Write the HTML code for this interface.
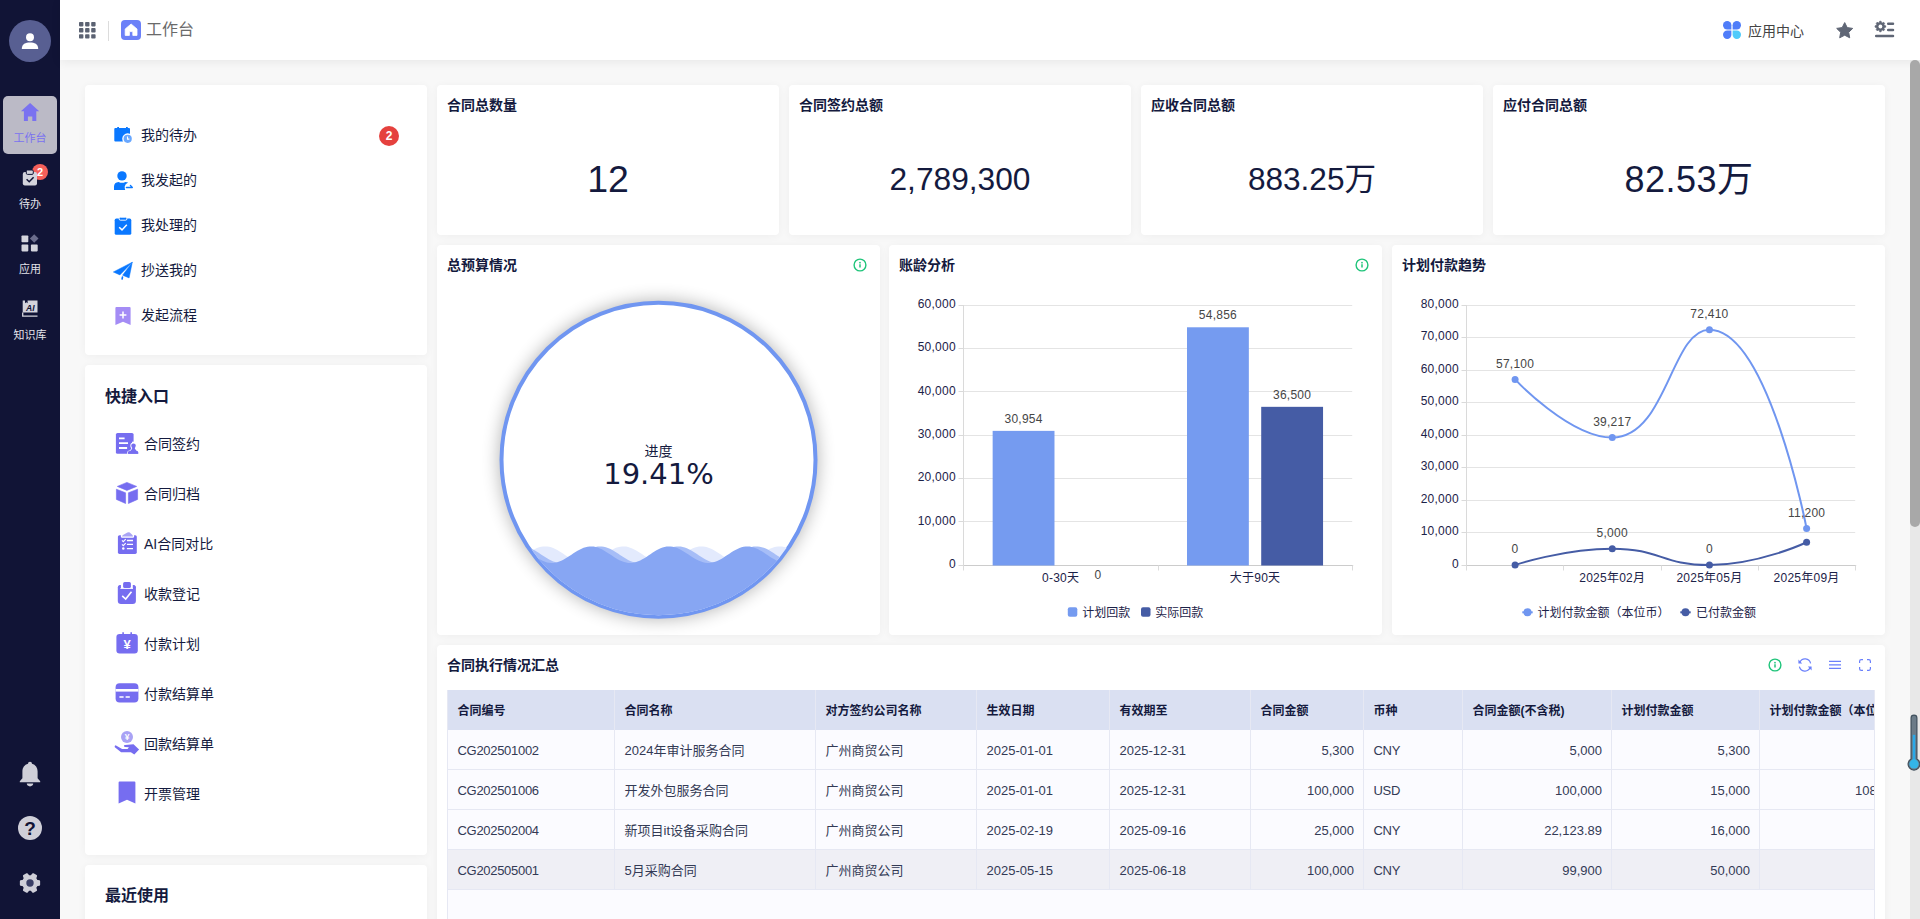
<!DOCTYPE html>
<html lang="zh-CN">
<head>
<meta charset="utf-8">
<title>工作台</title>
<style>
*{box-sizing:border-box;margin:0;padding:0}
html,body{width:1920px;height:919px;overflow:hidden;background:#f8f8f8;font-family:"Liberation Sans","Noto Sans CJK SC",sans-serif;color:#141a3e}
.abs{position:absolute}
#side{position:absolute;left:0;top:0;width:60px;height:919px;background:#111436}
#head{position:absolute;left:60px;top:0;width:1860px;height:60px;background:#fff;box-shadow:0 2px 10px rgba(0,0,0,.07)}
.card{position:absolute;background:#fff;border-radius:4px;box-shadow:0 1px 8px rgba(0,0,0,.045)}
.ct{position:absolute;left:10px;top:12px;font-size:14px;font-weight:700;line-height:16px;color:#141a3e;white-space:nowrap}
.big{position:absolute;left:0;right:0;text-align:center;font-size:36px;line-height:40px;color:#141a3e;top:74px;white-space:nowrap}
.nav{position:absolute;left:0;width:60px;text-align:center;font-size:11px;color:#e3e3ea;line-height:14px}
.li{position:absolute;left:56px;font-size:14px;line-height:16px;color:#141a3e;white-space:nowrap}
.qi{position:absolute;left:59px;font-size:14px;line-height:16px;color:#141a3e;white-space:nowrap}
svg{position:absolute;overflow:visible;z-index:1}
.tw{position:absolute;left:10px;top:45px;width:1428px;height:260px;overflow:hidden;background:#fbfbff;border-left:1px solid #e6e8f3;border-right:1px solid #e6e8f3}
.tin{position:absolute;left:-1px;top:0;width:1500px;height:200px}
.tr{position:absolute;left:0;width:1500px;height:40px;border-bottom:1px solid #e6e8f3;font-size:13px;color:#333a55}
.tr.th{background:#dae0f2;font-size:12px;font-weight:700;color:#141a3e;border-bottom:none}
.tr.hov{background:#efeff5}
.tc{position:absolute;top:0;height:40px;line-height:42px;padding:0 9px 0 9.5px;border-left:1px solid #e6e8f3;white-space:nowrap;overflow:hidden}
.tc.r{text-align:right}
.tc.n{letter-spacing:-0.3px}

</style>
</head>
<body>
<!-- SIDEBAR -->
<div id="side">
  <div class="abs" style="left:9px;top:20px;width:42px;height:42px;border-radius:50%;background:#585f92"></div>
  <svg style="left:21px;top:32px" width="18" height="18" viewBox="0 0 18 18"><circle cx="9" cy="5.2" r="4" fill="#fff"/><path d="M0.8 17 C0.8 12 4.5 10.6 9 10.6 C13.5 10.6 17.2 12 17.2 17Z" fill="#fff"/></svg>
  <div class="abs" style="left:3px;top:96px;width:54px;height:58px;border-radius:5px;background:#bbbac6"></div>

  <svg style="left:20px;top:102px" width="20" height="20" viewBox="0 0 20 20"><path d="M10.1 1.1 L19.2 9.3 H16.3 V18.9 H12.3 V14.4 H7.9 V18.9 H3.9 V9.3 H0.9 Z" fill="#7a72f0"/></svg>
  <svg style="left:22px;top:169px" width="16" height="18" viewBox="0 0 16 18"><rect x="0.8" y="3" width="14.2" height="13.4" rx="2" fill="#d4d4dc"/><rect x="4.3" y="1" width="7" height="4.4" rx="1.2" fill="#d4d4dc" stroke="#111436" stroke-width="1"/><path d="M4.6 10.3 L7.2 12.8 L11.6 8.2" fill="none" stroke="#111436" stroke-width="1.5"/></svg>
  <div class="abs" style="left:32px;top:164px;width:16px;height:16px;border-radius:50%;background:#f5605a;color:#fff;font-size:11px;line-height:16px;text-align:center;font-weight:700">2</div>
  <svg style="left:21px;top:235px" width="18" height="18" viewBox="0 0 18 18"><rect x="0.5" y="0.5" width="6.8" height="6.8" rx="0.8" fill="#d4d4dc"/><rect x="0.5" y="9.6" width="6.8" height="6.8" rx="0.8" fill="#d4d4dc"/><rect x="9.9" y="9.6" width="6.8" height="6.8" rx="0.8" fill="#d4d4dc"/><path d="M13.2 -0.8 L17.5 3.5 L13.2 7.8 L8.9 3.5 Z" fill="#6b6d8c"/></svg>
  <svg style="left:22px;top:300px" width="16" height="17" viewBox="0 0 16 17"><path d="M0.7 0.6 H3 V3.2 L4.3 2.2 L5.6 3.2 V0.6 H15.5 V12.4 H0.7 Z" fill="#d4d4dc"/><path d="M0.7 12.4 V16.2 H15.5" fill="none" stroke="#d4d4dc" stroke-width="1.3"/><text x="8.3" y="10.6" font-size="8.6" font-weight="700" font-style="italic" text-anchor="middle" fill="#111436" font-family="Liberation Sans,sans-serif">AI</text></svg>
  <svg style="left:19px;top:761px" width="22" height="26" viewBox="0 0 22 26"><path d="M11 0.8 C12.2 0.8 13 1.6 13 2.8 C16.6 3.8 18.6 6.8 18.6 10.6 V17.2 L21.2 20.2 V21.2 H0.8 V20.2 L3.4 17.2 V10.6 C3.4 6.8 5.4 3.8 9 2.8 C9 1.6 9.8 0.8 11 0.8Z" fill="#cfcfd8"/><path d="M7.8 22.6 H14.2 C14.2 24.4 12.8 25.4 11 25.4 C9.2 25.4 7.8 24.4 7.8 22.6Z" fill="#cfcfd8"/></svg>
  <div class="abs" style="left:18px;top:816px;width:24px;height:24px;border-radius:50%;background:#cfcfd8;color:#111436;font-size:19px;font-weight:700;line-height:25px;text-align:center">?</div>
  <svg style="left:19px;top:872px" width="22" height="22" viewBox="-11 -11 22 22"><path fill="#cfcfd8" stroke="#cfcfd8" stroke-width="2" stroke-linejoin="round" d="M6.66,-2.16 L9.14,-1.74 L9.14,1.74 L6.66,2.16 L5.20,4.68 L6.08,7.04 L3.06,8.78 L1.46,6.85 L-1.46,6.85 L-3.06,8.78 L-6.08,7.04 L-5.20,4.68 L-6.66,2.16 L-9.14,1.74 L-9.14,-1.74 L-6.66,-2.16 L-5.20,-4.68 L-6.08,-7.04 L-3.06,-8.78 L-1.46,-6.85 L1.46,-6.85 L3.06,-8.78 L6.08,-7.04 L5.20,-4.68Z"/><circle r="3.7" fill="#3a3f66"/></svg>
  <div class="nav" style="top:131px;color:#7a72f0">工作台</div>
  <div class="nav" style="top:197px">待办</div>
  <div class="nav" style="top:262px">应用</div>
  <div class="nav" style="top:328px">知识库</div>
</div>
<!-- HEADER -->
<div id="head">

  <svg style="left:18.6px;top:21.6px" width="17" height="17" viewBox="0 0 17 17"><rect x="0.0" y="0.0" width="4.4" height="4.4" rx="0.8" fill="#5b6272"/><rect x="0.0" y="6.1" width="4.4" height="4.4" rx="0.8" fill="#5b6272"/><rect x="0.0" y="12.2" width="4.4" height="4.4" rx="0.8" fill="#5b6272"/><rect x="6.1" y="0.0" width="4.4" height="4.4" rx="0.8" fill="#5b6272"/><rect x="6.1" y="6.1" width="4.4" height="4.4" rx="0.8" fill="#5b6272"/><rect x="6.1" y="12.2" width="4.4" height="4.4" rx="0.8" fill="#5b6272"/><rect x="12.2" y="0.0" width="4.4" height="4.4" rx="0.8" fill="#5b6272"/><rect x="12.2" y="6.1" width="4.4" height="4.4" rx="0.8" fill="#5b6272"/><rect x="12.2" y="12.2" width="4.4" height="4.4" rx="0.8" fill="#5b6272"/></svg>
  <svg style="left:61px;top:20px" width="20" height="20" viewBox="0 0 20 20"><path d="M10.1 4 L16 9 V15.4 H11.8 V11.6 H8.4 V15.4 H4.2 V9 Z" fill="#fff" stroke="#fff" stroke-width="0.8" stroke-linejoin="round"/></svg>
  <svg style="left:1663px;top:21px" width="18" height="18" viewBox="0 0 18 18"><path d="M4.2 0 A4.2 4.2 0 0 1 8.4 4.2 V8.4 H4.2 A4.2 4.2 0 0 1 4.2 0Z" fill="#4f7df9"/><path d="M13.8 0 A4.2 4.2 0 0 1 13.8 8.4 H9.6 V4.2 A4.2 4.2 0 0 1 13.8 0Z" fill="#4f7df9"/><path d="M4.2 18 A4.2 4.2 0 0 1 4.2 9.6 H8.4 V13.8 A4.2 4.2 0 0 1 4.2 18Z" fill="#4f7df9"/><path d="M13.8 18 A4.2 4.2 0 0 0 13.8 9.6 H9.6 V13.8 A4.2 4.2 0 0 0 13.8 18Z" fill="#4fcbfa"/></svg>
  <svg style="left:1776px;top:21.5px" width="18" height="17" viewBox="0 0 18 17"><path d="M8.7 0.6 L11.2 5.6 L16.7 6.4 L12.7 10.3 L13.7 15.8 L8.7 13.2 L3.7 15.8 L4.7 10.3 L0.7 6.4 L6.2 5.6 Z" fill="#5f6675" stroke="#5f6675" stroke-width="1" stroke-linejoin="round"/></svg>
  <svg style="left:1815px;top:21px" width="19" height="17" viewBox="0 0 19 17"><g transform="translate(5.4,5.5)"><path d="M4.08,-0.98 L5.26,-0.66 L5.26,0.66 L4.08,0.98 L3.58,2.19 L4.19,3.25 L3.25,4.19 L2.19,3.58 L0.98,4.08 L0.66,5.26 L-0.66,5.26 L-0.98,4.08 L-2.19,3.58 L-3.25,4.19 L-4.19,3.25 L-3.58,2.19 L-4.08,0.98 L-5.26,0.66 L-5.26,-0.66 L-4.08,-0.98 L-3.58,-2.19 L-4.19,-3.25 L-3.25,-4.19 L-2.19,-3.58 L-0.98,-4.08 L-0.66,-5.26 L0.66,-5.26 L0.98,-4.08 L2.19,-3.58 L3.25,-4.19 L4.19,-3.25 L3.58,-2.19Z" fill="#5f6675" stroke="#5f6675" stroke-width="0.8" stroke-linejoin="round"/><circle r="1.9" fill="#fff"/></g><path d="M13.2 2.8 H18 M13.2 9 H18 M1.2 15 H18" stroke="#5f6675" stroke-width="2.5" stroke-linecap="round" fill="none"/></svg>
  <div class="abs" style="left:48px;top:21px;width:1px;height:20px;background:#dcdcdc"></div>
  <div class="abs" style="left:61px;top:20px;width:20px;height:20px;border-radius:4px;background:#6b80f8"></div>
  <div class="abs" style="left:86px;top:19px;font-size:16px;line-height:22px;color:#6a6a6a">工作台</div>
  <div class="abs" style="left:1688px;top:23px;font-size:14px;line-height:16px;color:#444">应用中心</div>
</div>
<!-- LEFT -->
<div class="card" style="left:85px;top:85px;width:342px;height:270px" id="c1">

  <svg style="left:29px;top:42px" width="19" height="17" viewBox="0 0 19 17"><path d="M1.3 0.9 H3.2 V0 H5 V0.9 H12 V0 H13.8 V0.9 H15 Q16 0.9 16 1.9 V13.6 Q16 14.6 15 14.6 H1.3 Q0.3 14.6 0.3 13.6 V1.9 Q0.3 0.9 1.3 0.9Z" fill="#0a78ff"/><circle cx="13.7" cy="11.8" r="5.5" fill="#fff"/><circle cx="13.7" cy="11.8" r="4.1" fill="#69a8ff"/><path d="M13.5 9.4 V12.1 H15.4" stroke="#fff" stroke-width="1.1" fill="none"/></svg>
  <svg style="left:29px;top:86px" width="19" height="19" viewBox="0 0 19 19"><circle cx="8" cy="4.9" r="4.7" fill="#0a78ff"/><path d="M0 19 V15.6 Q0.1 11.2 4.6 10.9 Q8 12.6 11.4 10.9 Q13 10.9 14.1 11.6 Q11 13 10.7 15.6 Q10.6 17.4 11.2 19 Z" fill="#0a78ff"/><path d="M12.4 16.5 H18.3 L16.4 14.4" stroke="#0a78ff" stroke-width="1.4" stroke-linecap="round" stroke-linejoin="round" fill="none"/></svg>
  <svg style="left:29px;top:132px" width="18" height="18" viewBox="0 0 18 18"><rect x="0.7" y="1.6" width="16.6" height="16.2" rx="1.6" fill="#0a78ff"/><rect x="5.2" y="0.2" width="7.6" height="3" rx="1.2" fill="#0a78ff" stroke="#fff" stroke-width="0.9"/><path d="M5.2 10.2 L8 12.9 L12.8 7.8" fill="none" stroke="#fff" stroke-width="1.5"/></svg>
  <svg style="left:28px;top:177px" width="20" height="18" viewBox="0 0 20 18"><path d="M19.3 0.2 L0.3 10 L6.9 12.9 Z" fill="#0a78ff" stroke="#0a78ff" stroke-width="0.5" stroke-linejoin="round"/><path d="M19.3 0.2 L9.6 13.2 L16.1 15.9 Z" fill="#0a78ff" stroke="#0a78ff" stroke-width="0.5" stroke-linejoin="round"/><path d="M9.5 15 L9.1 17" stroke="#0a78ff" stroke-width="1.6" stroke-linecap="round"/></svg>
  <svg style="left:30px;top:222px" width="16" height="19" viewBox="0 0 16 19"><path d="M1.4 0 H14.6 Q15.6 0 15.6 1 V18 L8 14.8 L0.4 18 V1 Q0.4 0 1.4 0Z" fill="#a48cf5"/><path d="M8 4.6 V11.4 M4.6 8 H11.4" stroke="#fff" stroke-width="1.5" fill="none"/></svg>
  <div class="li" style="top:42px">我的待办</div>
  <div class="li" style="top:87px">我发起的</div>
  <div class="li" style="top:132px">我处理的</div>
  <div class="li" style="top:177px">抄送我的</div>
  <div class="li" style="top:222px">发起流程</div>
  <div class="abs" style="left:294px;top:41px;width:20px;height:20px;border-radius:50%;background:#e5413e;color:#fff;font-size:12px;font-weight:700;line-height:20px;text-align:center">2</div>
</div>
<div class="card" style="left:85px;top:365px;width:342px;height:490px" id="c2">
  <div class="abs" style="left:20px;top:22px;font-size:16px;font-weight:700;line-height:20px">快捷入口</div>

  <svg style="left:30px;top:68px" width="24" height="22" viewBox="0 0 24 22"><rect x="0.9" y="0" width="17.7" height="20.8" rx="1.6" fill="#766df0"/><path d="M4 5.4 H9.6 M4 10.1 H13 M4 15 H12.1" stroke="#fff" stroke-width="1.8" fill="none"/><rect x="17" y="8.7" width="4" height="13" fill="#fff"/><g fill="#766df0" stroke="#fff" stroke-width="1.7" paint-order="stroke"><path d="M13.1 20.8 V19.5 Q13.1 18.3 14.4 18.3 H15.2 L17.1 16 V14 H19.9 V16 L21.8 18.3 H22 Q23.2 18.3 23.2 19.5 V20.8 Z"/><circle cx="18.5" cy="12.7" r="2.3"/></g><path d="M13.1 20.8 V19.5 Q13.1 18.3 14.4 18.3 H15.2 L17.1 16 V13.6 H19.9 V16 L21.8 18.3 H22 Q23.2 18.3 23.2 19.5 V20.8 Z" fill="#766df0"/></svg>
  <svg style="left:30px;top:117px" width="24" height="23" viewBox="0 0 24 23"><g fill="#766df0" stroke="#766df0" stroke-width="0.6" stroke-linejoin="round"><path d="M11.9 0.4 L21.7 4.4 L11.9 8.4 L2.3 4.4 Z"/><path d="M1.4 7.2 L10.6 10.8 V21.5 L1.4 17.4 Z"/><path d="M22.6 7.2 L13.4 10.8 V21.5 L22.6 17.4 Z"/></g></svg>
  <svg style="left:32px;top:167px" width="20" height="22" viewBox="0 0 20 22"><rect x="0.9" y="3.2" width="18.9" height="18.7" rx="1.6" fill="#766df0"/><path d="M3.9 2.5 H17.1 V4.6 Q17.1 5.8 15.9 5.8 H5.1 Q3.9 5.8 3.9 4.6 Z" fill="#fff"/><path d="M5 4.6 Q5 3.6 6 3 L10.4 0.5 Q11.7 -0.1 12.8 0.5 L15.4 3 Q16 3.6 16 4.6 Z" fill="#a9a4f5"/><path d="M9.9 8.5 H16 M9.9 12.4 H16 M9.9 16.6 H16" stroke="#fff" stroke-width="1.3" fill="none"/><path d="M5 8.4 L6.3 9.7 L8.7 7.2 M5 12.3 L6.3 13.6 L8.7 11.1" stroke="#fff" stroke-width="1.1" fill="none"/><circle cx="6.3" cy="16.4" r="1.25" fill="#fff"/></svg>
  <svg style="left:32px;top:216px" width="20" height="23" viewBox="0 0 20 23"><rect x="0.8" y="3.9" width="18.1" height="19" rx="3.2" fill="#766df0"/><path d="M3.4 2 H16 V7.9 H3.4 Z" fill="#fff"/><path d="M0.8 7 Q0.8 3.9 3.9 3.9 V7 Z M18.9 7 Q18.9 3.9 15.8 3.9 V7 Z" fill="#766df0"/><rect x="6.1" y="1" width="7.8" height="6" rx="1.5" fill="#766df0"/><path d="M5.2 14.8 L8.7 18 L14.5 10.7" fill="none" stroke="#fff" stroke-width="1.6"/></svg>
  <svg style="left:31px;top:267px" width="22" height="22" viewBox="0 0 22 22"><rect x="0.4" y="1.9" width="21.4" height="19.6" rx="3.2" fill="#766df0"/><path d="M7.1 0.3 V2.5 M15.2 0.3 V2.5" stroke="#766df0" stroke-width="1.6"/><text x="11" y="16.6" font-size="13" font-weight="700" text-anchor="middle" fill="#fff" font-family="Liberation Sans,sans-serif">¥</text></svg>
  <svg style="left:30px;top:318px" width="24" height="20" viewBox="0 0 24 20"><rect x="0.6" y="0.2" width="22.8" height="19.4" rx="4" fill="#766df0"/><rect x="0.6" y="6" width="22.8" height="2.6" fill="#fff"/><path d="M4.4 14 H8.6 M10.6 14 H14.8" stroke="#fff" stroke-width="1.6"/></svg>
  <svg style="left:29px;top:366px" width="26" height="24" viewBox="0 0 26 24"><circle cx="13" cy="6" r="6" fill="#a9a2f5"/><text x="13" y="9" font-size="8.5" font-weight="700" text-anchor="middle" fill="#fff" font-family="Liberation Sans,sans-serif">¥</text><path d="M1.6 14.2 L8.1 17.9 H13.6 L14.9 16.3 L11 16 Q9.8 15.8 9.9 14.8 Q10 13.9 11 13.9 L19.5 13.3 L25.1 18.6 L20.3 23.4 L16.9 21.2 H7.1 L0.8 16.2 Q0.2 14.6 1.6 14.2Z" fill="#766df0"/></svg>
  <svg style="left:33px;top:416px" width="18" height="23" viewBox="0 0 18 23"><path d="M1.6 0.4 H16.4 Q17.4 0.4 17.4 1.4 V22.6 L9 18.8 L0.6 22.6 V1.4 Q0.6 0.4 1.6 0.4Z" fill="#766df0"/></svg>
  <div class="qi" style="top:71px">合同签约</div>
  <div class="qi" style="top:121px">合同归档</div>
  <div class="qi" style="top:171px">AI合同对比</div>
  <div class="qi" style="top:221px">收款登记</div>
  <div class="qi" style="top:271px">付款计划</div>
  <div class="qi" style="top:321px">付款结算单</div>
  <div class="qi" style="top:371px">回款结算单</div>
  <div class="qi" style="top:421px">开票管理</div>
</div>
<div class="card" style="left:85px;top:865px;width:342px;height:100px" id="c3">
  <div class="abs" style="left:20px;top:21px;font-size:16px;font-weight:700;line-height:20px">最近使用</div>
</div>
<!-- STATS -->
<div class="card" style="left:437px;top:85px;width:342px;height:150px"><div class="ct">合同总数量</div><div class="big" style="top:74.2px;font-size:37.5px">12</div></div>
<div class="card" style="left:789px;top:85px;width:342px;height:150px"><div class="ct">合同签约总额</div><div class="big" style="font-size:31.7px">2,789,300</div></div>
<div class="card" style="left:1141px;top:85px;width:342px;height:150px"><div class="ct">应收合同总额</div><div class="big" style="font-size:31.6px;top:74px">883.25万</div></div>
<div class="card" style="left:1493px;top:85px;width:392px;height:150px"><div class="ct">应付合同总额</div><div class="big" style="top:75px;letter-spacing:.45px">82.53万</div></div>
<!-- CHARTS -->
<div class="card" style="left:437px;top:245px;width:443px;height:390px" id="g1"><div class="ct">总预算情况</div>
<svg style="left:0;top:0" width="443" height="390" viewBox="0 0 443 390">
<defs><clipPath id="lq"><circle cx="221.5" cy="214.75" r="155.5"/></clipPath><filter id="lqs" x="-30%" y="-30%" width="160%" height="160%"><feGaussianBlur stdDeviation="9"/></filter></defs>
<circle cx="221.5" cy="214.75" r="159" fill="#000" opacity=".3" filter="url(#lqs)"/>
<circle cx="221.5" cy="214.75" r="157" fill="#fff" stroke="#7096f1" stroke-width="4"/>
<g clip-path="url(#lq)">
<path d="M59.5,315.7 L61.52,316.55 L63.55,317.22 L65.58,317.69 L67.6,317.95 L69.62,317.99 L71.65,317.81 L73.67,317.42 L75.7,316.83 L77.72,316.04 L79.75,315.09 L81.78,314 L83.8,312.79 L85.83,311.5 L87.85,310.17 L89.88,308.82 L91.9,307.49 L93.92,306.23 L95.95,305.05 L97.97,304 L100,303.1 L102.03,302.37 L104.05,301.84 L106.08,301.51 L108.1,301.4 L110.12,301.51 L112.15,301.84 L114.17,302.37 L116.2,303.1 L118.22,304 L120.25,305.05 L122.28,306.23 L124.3,307.49 L126.33,308.82 L128.35,310.17 L130.38,311.5 L132.4,312.79 L134.43,314 L136.45,315.09 L138.47,316.04 L140.5,316.83 L142.53,317.42 L144.55,317.81 L146.57,317.99 L148.6,317.95 L150.62,317.69 L152.65,317.22 L154.68,316.55 L156.7,315.7 L158.72,314.69 L160.75,313.55 L162.78,312.31 L164.8,311 L166.82,309.65 L168.85,308.31 L170.88,307 L172.9,305.76 L174.93,304.63 L176.95,303.63 L178.97,302.8 L181,302.14 L183.03,301.69 L185.05,301.44 L187.07,301.42 L189.1,301.61 L191.12,302.02 L193.15,302.63 L195.18,303.42 L197.2,304.38 L199.22,305.49 L201.25,306.7 L203.28,307.99 L205.3,309.33 L207.32,310.68 L209.35,312 L211.38,313.26 L213.4,314.43 L215.43,315.47 L217.45,316.36 L219.47,317.08 L221.5,317.6 L223.53,317.91 L225.55,318 L227.57,317.87 L229.6,317.53 L231.62,316.98 L233.65,316.24 L235.68,315.33 L237.7,314.27 L239.72,313.08 L241.75,311.81 L243.78,310.48 L245.8,309.13 L247.82,307.8 L249.85,306.52 L251.88,305.32 L253.9,304.23 L255.93,303.29 L257.95,302.52 L259.98,301.94 L262,301.57 L264.02,301.41 L266.05,301.46 L268.07,301.74 L270.1,302.23 L272.12,302.91 L274.15,303.77 L276.18,304.79 L278.2,305.94 L280.23,307.19 L282.25,308.5 L284.27,309.85 L286.3,311.19 L288.32,312.5 L290.35,313.72 L292.38,314.85 L294.4,315.83 L296.43,316.66 L298.45,317.3 L300.48,317.74 L302.5,317.97 L304.52,317.98 L306.55,317.77 L308.57,317.35 L310.6,316.72 L312.62,315.91 L314.65,314.94 L316.68,313.83 L318.7,312.6 L320.73,311.31 L322.75,309.97 L324.77,308.62 L326.8,307.3 L328.82,306.05 L330.85,304.89 L332.88,303.85 L334.9,302.98 L336.93,302.28 L338.95,301.77 L340.98,301.48 L343,301.4 L345.02,301.54 L347.05,301.9 L349.07,302.47 L351.1,303.22 L353.12,304.15 L355.15,305.22 L357.18,306.41 L359.2,307.69 L361.23,309.02 L363.25,310.37 L365.27,311.7 L367.3,312.98 L369.32,314.17 L371.35,315.24 L373.38,316.17 L375.4,316.93 L377.43,317.49 L379.45,317.85 L381.48,318 L383.5,317.92 L383.5,376.75 L59.5,376.75 Z" fill="#e3eafd"/>
<path d="M59.5,313.46 L61.52,312.21 L63.55,310.9 L65.58,309.55 L67.6,308.21 L69.62,306.9 L71.65,305.68 L73.67,304.55 L75.7,303.57 L77.72,302.74 L79.75,302.1 L81.78,301.66 L83.8,301.43 L85.83,301.42 L87.85,301.63 L89.88,302.05 L91.9,302.68 L93.92,303.49 L95.95,304.46 L97.97,305.57 L100,306.8 L102.03,308.09 L104.05,309.43 L106.08,310.78 L108.1,312.1 L110.12,313.35 L112.15,314.51 L114.17,315.55 L116.2,316.42 L118.22,317.12 L120.25,317.63 L122.28,317.92 L124.3,318 L126.33,317.86 L128.35,317.5 L130.38,316.93 L132.4,316.18 L134.43,315.25 L136.45,314.18 L138.47,312.99 L140.5,311.71 L142.53,310.38 L144.55,309.03 L146.57,307.7 L148.6,306.42 L150.62,305.23 L152.65,304.16 L154.68,303.23 L156.7,302.47 L158.72,301.91 L160.75,301.55 L162.78,301.4 L164.8,301.48 L166.82,301.77 L168.85,302.27 L170.88,302.97 L172.9,303.84 L174.93,304.87 L176.95,306.03 L178.97,307.28 L181,308.6 L183.03,309.95 L185.05,311.29 L187.07,312.59 L189.1,313.81 L191.12,314.93 L193.15,315.9 L195.18,316.71 L197.2,317.34 L199.22,317.76 L201.25,317.98 L203.28,317.97 L205.3,317.74 L207.32,317.31 L209.35,316.67 L211.38,315.84 L213.4,314.86 L215.43,313.74 L217.45,312.51 L219.47,311.21 L221.5,309.87 L223.53,308.52 L225.55,307.21 L227.57,305.96 L229.6,304.81 L231.62,303.78 L233.65,302.92 L235.68,302.23 L237.7,301.74 L239.72,301.47 L241.75,301.41 L243.78,301.56 L245.8,301.94 L247.82,302.51 L249.85,303.28 L251.88,304.22 L253.9,305.3 L255.93,306.5 L257.95,307.78 L259.98,309.12 L262,310.47 L264.02,311.79 L266.05,313.07 L268.07,314.25 L270.1,315.32 L272.12,316.23 L274.15,316.98 L276.18,317.53 L278.2,317.87 L280.23,318 L282.25,317.91 L284.27,317.6 L286.3,317.08 L288.32,316.37 L290.35,315.49 L292.38,314.45 L294.4,313.28 L296.43,312.02 L298.45,310.7 L300.48,309.35 L302.5,308.01 L304.52,306.72 L306.55,305.5 L308.57,304.4 L310.6,303.43 L312.62,302.63 L314.65,302.02 L316.68,301.61 L318.7,301.42 L320.73,301.44 L322.75,301.68 L324.77,302.13 L326.8,302.79 L328.82,303.62 L330.85,304.62 L332.88,305.75 L334.9,306.98 L336.93,308.29 L338.95,309.63 L340.98,310.98 L343,312.29 L345.02,313.53 L347.05,314.68 L349.07,315.69 L351.1,316.54 L353.12,317.21 L355.15,317.68 L357.18,317.95 L359.2,317.99 L361.23,317.82 L363.25,317.43 L365.27,316.83 L367.3,316.05 L369.32,315.1 L371.35,314.01 L373.38,312.81 L375.4,311.52 L377.43,310.18 L379.45,308.83 L381.48,307.51 L383.5,306.24 L383.5,376.75 L59.5,376.75 Z" fill="#a6bdf7"/>
<path d="M59.5,307.56 L61.52,306.29 L63.55,305.11 L65.58,304.05 L67.6,303.14 L69.62,302.4 L71.65,301.86 L73.67,301.52 L75.7,301.4 L77.72,301.5 L79.75,301.81 L81.78,302.34 L83.8,303.06 L85.83,303.95 L87.85,305 L89.88,306.17 L91.9,307.43 L93.92,308.75 L95.95,310.1 L97.97,311.44 L100,312.73 L102.03,313.94 L104.05,315.04 L106.08,316 L108.1,316.79 L110.12,317.4 L112.15,317.8 L114.17,317.99 L116.2,317.95 L118.22,317.71 L120.25,317.24 L122.28,316.58 L124.3,315.74 L126.33,314.74 L128.35,313.61 L130.38,312.37 L132.4,311.06 L134.43,309.72 L136.45,308.37 L138.47,307.06 L140.5,305.82 L142.53,304.68 L144.55,303.68 L146.57,302.83 L148.6,302.17 L150.62,301.7 L152.65,301.45 L154.68,301.41 L156.7,301.59 L158.72,301.99 L160.75,302.59 L162.78,303.38 L164.8,304.33 L166.82,305.43 L168.85,306.64 L170.88,307.93 L172.9,309.27 L174.93,310.62 L176.95,311.94 L178.97,313.2 L181,314.38 L183.03,315.43 L185.05,316.32 L187.07,317.05 L189.1,317.58 L191.12,317.9 L193.15,318 L195.18,317.88 L197.2,317.55 L199.22,317.02 L201.25,316.28 L203.28,315.38 L205.3,314.32 L207.32,313.14 L209.35,311.88 L211.38,310.55 L213.4,309.2 L215.43,307.86 L217.45,306.58 L219.47,305.37 L221.5,304.28 L223.53,303.34 L225.55,302.56 L227.57,301.97 L229.6,301.58 L231.62,301.41 L233.65,301.46 L235.68,301.72 L237.7,302.2 L239.72,302.87 L241.75,303.73 L243.78,304.74 L245.8,305.88 L247.82,307.13 L249.85,308.44 L251.88,309.78 L253.9,311.13 L255.93,312.43 L257.95,313.67 L259.98,314.79 L262,315.79 L264.02,316.62 L266.05,317.27 L268.07,317.72 L270.1,317.96 L272.12,317.98 L274.15,317.78 L276.18,317.37 L278.2,316.76 L280.23,315.96 L282.25,314.99 L284.27,313.88 L286.3,312.67 L288.32,311.37 L290.35,310.03 L292.38,308.69 L294.4,307.36 L296.43,306.11 L298.45,304.94 L300.48,303.9 L302.5,303.02 L304.52,302.31 L306.55,301.79 L308.57,301.49 L310.6,301.4 L312.62,301.53 L314.65,301.88 L316.68,302.43 L318.7,303.18 L320.73,304.1 L322.75,305.16 L324.77,306.35 L326.8,307.62 L328.82,308.95 L330.85,310.3 L332.88,311.63 L334.9,312.91 L336.93,314.11 L338.95,315.19 L340.98,316.13 L343,316.89 L345.02,317.47 L347.05,317.84 L349.07,318 L351.1,317.93 L353.12,317.65 L355.15,317.16 L357.18,316.47 L359.2,315.6 L361.23,314.58 L363.25,313.43 L365.27,312.18 L367.3,310.86 L369.32,309.52 L371.35,308.17 L373.38,306.87 L375.4,305.65 L377.43,304.53 L379.45,303.54 L381.48,302.72 L383.5,302.09 L383.5,376.75 L59.5,376.75 Z" fill="#87a6f3"/>
</g>
<text x="221.5" y="210.7" text-anchor="middle" font-size="14" fill="#141a3e">进度</text>
<text x="221.5" y="239.2" text-anchor="middle" font-size="29" font-family="DejaVu Sans,sans-serif" fill="#141a3e">19.41%</text>
</svg>
<svg style="left:415.6px;top:12.800000000000011px" width="14" height="14" viewBox="-7 -7 14 14"><circle r="5.9" fill="none" stroke="#1fc47a" stroke-width="1.4"/><circle cy="-2.3" r="0.85" fill="#1fc47a"/><path d="M0 -0.7 V2.6" stroke="#1fc47a" stroke-width="1.5"/></svg>
</div>
<div class="card" style="left:889px;top:245px;width:493px;height:390px" id="g2"><div class="ct">账龄分析</div>
<svg style="left:0;top:0" width="493" height="390" viewBox="0 0 493 390" font-size="12">
<line x1="69.5" x2="74.5" y1="320.5" y2="320.5" stroke="#dadada"/>
<text x="66.9" y="322.9" text-anchor="end" fill="#1c2248" letter-spacing="0.25">0</text>
<line x1="74.5" x2="463.2" y1="276.5" y2="276.5" stroke="#e4e4e4"/>
<line x1="69.5" x2="74.5" y1="276.5" y2="276.5" stroke="#dadada"/>
<text x="66.9" y="279.57" text-anchor="end" fill="#1c2248" letter-spacing="0.25">10,000</text>
<line x1="74.5" x2="463.2" y1="233.5" y2="233.5" stroke="#e4e4e4"/>
<line x1="69.5" x2="74.5" y1="233.5" y2="233.5" stroke="#dadada"/>
<text x="66.9" y="236.23" text-anchor="end" fill="#1c2248" letter-spacing="0.25">20,000</text>
<line x1="74.5" x2="463.2" y1="190.5" y2="190.5" stroke="#e4e4e4"/>
<line x1="69.5" x2="74.5" y1="190.5" y2="190.5" stroke="#dadada"/>
<text x="66.9" y="192.9" text-anchor="end" fill="#1c2248" letter-spacing="0.25">30,000</text>
<line x1="74.5" x2="463.2" y1="146.5" y2="146.5" stroke="#e4e4e4"/>
<line x1="69.5" x2="74.5" y1="146.5" y2="146.5" stroke="#dadada"/>
<text x="66.9" y="149.57" text-anchor="end" fill="#1c2248" letter-spacing="0.25">40,000</text>
<line x1="74.5" x2="463.2" y1="103.5" y2="103.5" stroke="#e4e4e4"/>
<line x1="69.5" x2="74.5" y1="103.5" y2="103.5" stroke="#dadada"/>
<text x="66.9" y="106.23" text-anchor="end" fill="#1c2248" letter-spacing="0.25">50,000</text>
<line x1="74.5" x2="463.2" y1="60.5" y2="60.5" stroke="#e4e4e4"/>
<line x1="69.5" x2="74.5" y1="60.5" y2="60.5" stroke="#dadada"/>
<text x="66.9" y="62.9" text-anchor="end" fill="#1c2248" letter-spacing="0.25">60,000</text>
<line x1="74.5" x2="74.5" y1="60" y2="320.5" stroke="#dadada"/>
<line x1="74.5" x2="464.2" y1="320.5" y2="320.5" stroke="#cccccc"/>
<line x1="74.5" x2="74.5" y1="320.5" y2="325.5" stroke="#dcdcdc"/>
<line x1="269.5" x2="269.5" y1="320.5" y2="325.5" stroke="#dcdcdc"/>
<line x1="463.5" x2="463.5" y1="320.5" y2="325.5" stroke="#dcdcdc"/>
<rect x="103.65" y="185.87" width="61.84" height="134.63" fill="#759bf0"/>
<text x="134.57" y="177.67" text-anchor="middle" fill="#464646" letter-spacing="0.25">30,954</text>
<rect x="298" y="82.29" width="61.84" height="238.21" fill="#759bf0"/>
<text x="328.92" y="74.09" text-anchor="middle" fill="#464646" letter-spacing="0.25">54,856</text>
<rect x="372.21" y="161.83" width="61.84" height="158.67" fill="#455ca5"/>
<text x="403.13" y="153.63" text-anchor="middle" fill="#464646" letter-spacing="0.25">36,500</text>
<text x="208.78" y="333.7" text-anchor="middle" fill="#464646">0</text>
<text x="171.67" y="337" text-anchor="middle" fill="#1c2248" letter-spacing="0.25">0-30天</text>
<text x="366.03" y="337" text-anchor="middle" fill="#1c2248" letter-spacing="0.25">大于90天</text>
<rect x="178.8" y="362.3" width="9.5" height="9.5" rx="2" fill="#759bf0"/>
<text x="193.3" y="371.9" fill="#1c2248">计划回款</text>
<rect x="252" y="362.3" width="9.5" height="9.5" rx="2" fill="#455ca5"/>
<text x="266.2" y="371.9" fill="#1c2248">实际回款</text>
</svg>
<svg style="left:465.70000000000005px;top:12.800000000000011px" width="14" height="14" viewBox="-7 -7 14 14"><circle r="5.9" fill="none" stroke="#1fc47a" stroke-width="1.4"/><circle cy="-2.3" r="0.85" fill="#1fc47a"/><path d="M0 -0.7 V2.6" stroke="#1fc47a" stroke-width="1.5"/></svg>
</div>
<div class="card" style="left:1392px;top:245px;width:493px;height:390px" id="g3"><div class="ct">计划付款趋势</div>
<svg style="left:0;top:0" width="493" height="390" viewBox="0 0 493 390" font-size="12">
<line x1="69.5" x2="74.5" y1="320.5" y2="320.5" stroke="#dadada"/>
<text x="66.9" y="322.9" text-anchor="end" fill="#1c2248" letter-spacing="0.25">0</text>
<line x1="74.5" x2="463.2" y1="287.5" y2="287.5" stroke="#e4e4e4"/>
<line x1="69.5" x2="74.5" y1="287.5" y2="287.5" stroke="#dadada"/>
<text x="66.9" y="290.4" text-anchor="end" fill="#1c2248" letter-spacing="0.25">10,000</text>
<line x1="74.5" x2="463.2" y1="255.5" y2="255.5" stroke="#e4e4e4"/>
<line x1="69.5" x2="74.5" y1="255.5" y2="255.5" stroke="#dadada"/>
<text x="66.9" y="257.9" text-anchor="end" fill="#1c2248" letter-spacing="0.25">20,000</text>
<line x1="74.5" x2="463.2" y1="222.5" y2="222.5" stroke="#e4e4e4"/>
<line x1="69.5" x2="74.5" y1="222.5" y2="222.5" stroke="#dadada"/>
<text x="66.9" y="225.4" text-anchor="end" fill="#1c2248" letter-spacing="0.25">30,000</text>
<line x1="74.5" x2="463.2" y1="190.5" y2="190.5" stroke="#e4e4e4"/>
<line x1="69.5" x2="74.5" y1="190.5" y2="190.5" stroke="#dadada"/>
<text x="66.9" y="192.9" text-anchor="end" fill="#1c2248" letter-spacing="0.25">40,000</text>
<line x1="74.5" x2="463.2" y1="157.5" y2="157.5" stroke="#e4e4e4"/>
<line x1="69.5" x2="74.5" y1="157.5" y2="157.5" stroke="#dadada"/>
<text x="66.9" y="160.4" text-anchor="end" fill="#1c2248" letter-spacing="0.25">50,000</text>
<line x1="74.5" x2="463.2" y1="125.5" y2="125.5" stroke="#e4e4e4"/>
<line x1="69.5" x2="74.5" y1="125.5" y2="125.5" stroke="#dadada"/>
<text x="66.9" y="127.9" text-anchor="end" fill="#1c2248" letter-spacing="0.25">60,000</text>
<line x1="74.5" x2="463.2" y1="92.5" y2="92.5" stroke="#e4e4e4"/>
<line x1="69.5" x2="74.5" y1="92.5" y2="92.5" stroke="#dadada"/>
<text x="66.9" y="95.4" text-anchor="end" fill="#1c2248" letter-spacing="0.25">70,000</text>
<line x1="74.5" x2="463.2" y1="60.5" y2="60.5" stroke="#e4e4e4"/>
<line x1="69.5" x2="74.5" y1="60.5" y2="60.5" stroke="#dadada"/>
<text x="66.9" y="62.9" text-anchor="end" fill="#1c2248" letter-spacing="0.25">80,000</text>
<line x1="74.5" x2="74.5" y1="60" y2="320.5" stroke="#dadada"/>
<line x1="74.5" x2="464.2" y1="320.5" y2="320.5" stroke="#cccccc"/>
<line x1="74.5" x2="74.5" y1="320.5" y2="325.5" stroke="#dcdcdc"/>
<line x1="171.5" x2="171.5" y1="320.5" y2="325.5" stroke="#dcdcdc"/>
<line x1="269.5" x2="269.5" y1="320.5" y2="325.5" stroke="#dcdcdc"/>
<line x1="366.5" x2="366.5" y1="320.5" y2="325.5" stroke="#dcdcdc"/>
<line x1="463.5" x2="463.5" y1="320.5" y2="325.5" stroke="#dcdcdc"/>
<path d="M123.09,134.43 C123.09,134.43 177.68,192.54 220.26,192.54 C274.86,192.54 278.95,84.67 317.44,84.67 C376.13,84.67 414.61,283.6 414.61,283.6" fill="none" stroke="#7096f0" stroke-width="2" stroke-linejoin="round"/>
<circle cx="123.09" cy="134.43" r="3.5" fill="#7096f0"/>
<text x="123.09" y="122.73" text-anchor="middle" fill="#464646" letter-spacing="0.25">57,100</text>
<circle cx="220.26" cy="192.54" r="3.5" fill="#7096f0"/>
<text x="220.26" y="180.84" text-anchor="middle" fill="#464646" letter-spacing="0.25">39,217</text>
<circle cx="317.44" cy="84.67" r="3.5" fill="#7096f0"/>
<text x="317.44" y="72.97" text-anchor="middle" fill="#464646" letter-spacing="0.25">72,410</text>
<circle cx="414.61" cy="283.6" r="3.5" fill="#7096f0"/>
<text x="414.61" y="271.9" text-anchor="middle" fill="#464646" letter-spacing="0.25">11,200</text>
<path d="M123.09,320 C123.09,320 171.68,303.75 220.26,303.75 C268.85,303.75 269.16,320 317.44,320 C366.34,320 414.61,297.25 414.61,297.25" fill="none" stroke="#455ca5" stroke-width="2" stroke-linejoin="round"/>
<circle cx="123.09" cy="320" r="3.5" fill="#455ca5"/>
<text x="123.09" y="308.3" text-anchor="middle" fill="#464646" letter-spacing="0.25">0</text>
<circle cx="220.26" cy="303.75" r="3.5" fill="#455ca5"/>
<text x="220.26" y="292.05" text-anchor="middle" fill="#464646" letter-spacing="0.25">5,000</text>
<circle cx="317.44" cy="320" r="3.5" fill="#455ca5"/>
<text x="317.44" y="308.3" text-anchor="middle" fill="#464646" letter-spacing="0.25">0</text>
<circle cx="414.61" cy="297.25" r="3.5" fill="#455ca5"/>
<text x="220.26" y="337" text-anchor="middle" fill="#1c2248" letter-spacing="0.25">2025年02月</text>
<text x="317.44" y="337" text-anchor="middle" fill="#1c2248" letter-spacing="0.25">2025年05月</text>
<text x="414.61" y="337" text-anchor="middle" fill="#1c2248" letter-spacing="0.25">2025年09月</text>
<line x1="130.3" x2="140.7" y1="367.3" y2="367.3" stroke="#7096f0" stroke-width="2"/>
<circle cx="135.5" cy="367.3" r="4" fill="#7096f0"/>
<text x="145.6" y="371.9" fill="#1c2248">计划付款金额（本位币）</text>
<line x1="288.3" x2="298.7" y1="367.3" y2="367.3" stroke="#455ca5" stroke-width="2"/>
<circle cx="293.5" cy="367.3" r="4" fill="#455ca5"/>
<text x="303.9" y="371.9" fill="#1c2248">已付款金额</text>
</svg>
</div>
<!-- TABLE -->
<div class="card" style="left:437px;top:645px;width:1448px;height:300px" id="tb"><div class="ct">合同执行情况汇总</div>
<div class="tw">
<div class="tin">
<div class="tr th" style="top:0">
<div class="tc" style="left:0px;width:167px">合同编号</div>
<div class="tc" style="left:167px;width:201px">合同名称</div>
<div class="tc" style="left:368px;width:161px">对方签约公司名称</div>
<div class="tc" style="left:529px;width:133px">生效日期</div>
<div class="tc" style="left:662px;width:141px">有效期至</div>
<div class="tc" style="left:803px;width:113px">合同金额</div>
<div class="tc" style="left:916px;width:99px">币种</div>
<div class="tc" style="left:1015px;width:149px">合同金额(不含税)</div>
<div class="tc" style="left:1164px;width:148px">计划付款金额</div>
<div class="tc" style="left:1312px;width:152px">计划付款金额（本位币）</div>
</div>
<div class="tr" style="top:40px">
<div class="tc n" style="left:0px;width:167px">CG202501002</div>
<div class="tc" style="left:167px;width:201px">2024年审计服务合同</div>
<div class="tc" style="left:368px;width:161px">广州商贸公司</div>
<div class="tc" style="left:529px;width:133px">2025-01-01</div>
<div class="tc" style="left:662px;width:141px">2025-12-31</div>
<div class="tc r" style="left:803px;width:113px">5,300</div>
<div class="tc n" style="left:916px;width:99px">CNY</div>
<div class="tc r" style="left:1015px;width:149px">5,000</div>
<div class="tc r" style="left:1164px;width:148px">5,300</div>
<div class="tc r" style="left:1312px;width:152px"></div>
</div>
<div class="tr" style="top:80px">
<div class="tc n" style="left:0px;width:167px">CG202501006</div>
<div class="tc" style="left:167px;width:201px">开发外包服务合同</div>
<div class="tc" style="left:368px;width:161px">广州商贸公司</div>
<div class="tc" style="left:529px;width:133px">2025-01-01</div>
<div class="tc" style="left:662px;width:141px">2025-12-31</div>
<div class="tc r" style="left:803px;width:113px">100,000</div>
<div class="tc n" style="left:916px;width:99px">USD</div>
<div class="tc r" style="left:1015px;width:149px">100,000</div>
<div class="tc r" style="left:1164px;width:148px">15,000</div>
<div class="tc r" style="left:1312px;width:152px">108,000</div>
</div>
<div class="tr" style="top:120px">
<div class="tc n" style="left:0px;width:167px">CG202502004</div>
<div class="tc" style="left:167px;width:201px">新项目it设备采购合同</div>
<div class="tc" style="left:368px;width:161px">广州商贸公司</div>
<div class="tc" style="left:529px;width:133px">2025-02-19</div>
<div class="tc" style="left:662px;width:141px">2025-09-16</div>
<div class="tc r" style="left:803px;width:113px">25,000</div>
<div class="tc n" style="left:916px;width:99px">CNY</div>
<div class="tc r" style="left:1015px;width:149px">22,123.89</div>
<div class="tc r" style="left:1164px;width:148px">16,000</div>
<div class="tc r" style="left:1312px;width:152px"></div>
</div>
<div class="tr hov" style="top:160px">
<div class="tc n" style="left:0px;width:167px">CG202505001</div>
<div class="tc" style="left:167px;width:201px">5月采购合同</div>
<div class="tc" style="left:368px;width:161px">广州商贸公司</div>
<div class="tc" style="left:529px;width:133px">2025-05-15</div>
<div class="tc" style="left:662px;width:141px">2025-06-18</div>
<div class="tc r" style="left:803px;width:113px">100,000</div>
<div class="tc n" style="left:916px;width:99px">CNY</div>
<div class="tc r" style="left:1015px;width:149px">99,900</div>
<div class="tc r" style="left:1164px;width:148px">50,000</div>
<div class="tc r" style="left:1312px;width:152px"></div>
</div>
</div></div>
<svg style="left:1331px;top:12.600000000000023px" width="14" height="14" viewBox="-7 -7 14 14"><circle r="5.9" fill="none" stroke="#1fc47a" stroke-width="1.4"/><circle cy="-2.3" r="0.85" fill="#1fc47a"/><path d="M0 -0.7 V2.6" stroke="#1fc47a" stroke-width="1.5"/></svg>
<svg style="left:1361px;top:13px" width="14" height="14" viewBox="-7 -7 14 14"><path d="M-5.6 1.6 A5.7 5.7 0 0 0 5.2 2.6 M5.6 -1.6 A5.7 5.7 0 0 0 -5.2 -2.6" fill="none" stroke="#6b80fb" stroke-width="1.2"/><path d="M-6.6 -5.4 V-1.6 H-2.8 Z M6.6 5.4 V1.6 H2.8 Z" fill="#6b80fb"/></svg>
<svg style="left:1392px;top:13px" width="12" height="14" viewBox="0 0 12 14"><path d="M0 3.4 H12 M0 6.8 H12 M0 10.3 H12" stroke="#6b80fb" stroke-width="1.2"/></svg>
<svg style="left:1422px;top:14px" width="12" height="12" viewBox="0 0 12 12"><path d="M0.6 4 V2.2 Q0.6 0.6 2.2 0.6 H4 M8 0.6 H9.8 Q11.4 0.6 11.4 2.2 V4 M11.4 8 V9.8 Q11.4 11.4 9.8 11.4 H8 M4 11.4 H2.2 Q0.6 11.4 0.6 9.8 V8" fill="none" stroke="#6b80fb" stroke-width="1.2"/></svg>

</div>
<!-- SCROLLBAR -->
<div class="abs" style="left:1910px;top:60px;width:10px;height:859px;background:#e8e8e8"></div>
<div class="abs" style="left:1910px;top:60px;width:10px;height:466.6px;background:#a8a8a8;border-radius:5px"></div>
<svg style="left:1900px;top:710px" width="20" height="64" viewBox="0 0 20 64"><path d="M11.1 8 A2.9 2.9 0 0 1 16.9 8 V49 A5.9 5.9 0 1 1 11.1 49 Z" fill="#6b7b88" stroke="#3f4f5c" stroke-width="1.2"/><path d="M12.7 24.8 H15.3 V50 H12.7 Z" fill="#29a8e8"/><circle cx="14" cy="53.9" r="4.6" fill="#33b5e8"/></svg>
</body>
</html>
